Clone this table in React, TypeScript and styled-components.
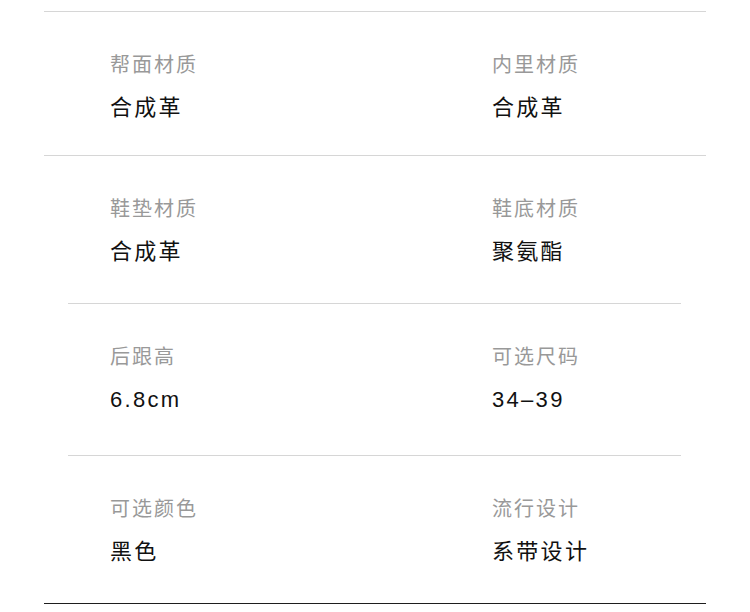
import styled, { createGlobalStyle } from "styled-components";

const GlobalStyle = createGlobalStyle`
  html, body {
    margin: 0;
    padding: 0;
    background: #ffffff;
  }
  body {
    font-family: "Liberation Sans", "Noto Sans CJK SC", sans-serif;
  }
`;

interface Spec {
  label: string;
  value: string;
}

interface Section {
  items: [Spec, Spec];
  inset: boolean;
  height: number;
}

const sections: Section[] = [
  {
    items: [
      { label: "帮面材质", value: "合成革" },
      { label: "内里材质", value: "合成革" },
    ],
    inset: false,
    height: 143,
  },
  {
    items: [
      { label: "鞋垫材质", value: "合成革" },
      { label: "鞋底材质", value: "聚氨酯" },
    ],
    inset: false,
    height: 147,
  },
  {
    items: [
      { label: "后跟高", value: "6.8cm" },
      { label: "可选尺码", value: "34–39" },
    ],
    inset: true,
    height: 151,
  },
  {
    items: [
      { label: "可选颜色", value: "黑色" },
      { label: "流行设计", value: "系带设计" },
    ],
    inset: true,
    height: 147,
  },
];

export default function App() {
  return (
    <>
      <GlobalStyle />
      <Page>
        {sections.map((section, i) => (
          <div key={i}>
            <Divider $inset={section.inset} />
            <Row $height={section.height}>
              {section.items.map((spec) => (
                <Cell key={spec.label}>
                  <Label>{spec.label}</Label>
                  <Value>{spec.value}</Value>
                </Cell>
              ))}
            </Row>
          </div>
        ))}
        <Divider $dark />
      </Page>
    </>
  );
}

const Page = styled.div`
  width: 750px;
  height: 612px;
  padding-top: 11px;
  box-sizing: border-box;
  background: #ffffff;
  display: flex;
  flex-direction: column;
`;

const Divider = styled.div<{ $inset?: boolean; $dark?: boolean }>`
  height: 1px;
  margin: 0 ${(p) => (p.$inset ? "69px 0 68px" : "44px")};
  background: ${(p) => (p.$dark ? "#1e1e1e" : "#d6d6d6")};
`;

const Row = styled.div<{ $height: number }>`
  height: ${(p) => p.$height}px;
  box-sizing: border-box;
  padding: 38px 0 0 110px;
  display: grid;
  grid-template-columns: 382px 1fr;
`;

const Cell = styled.div`
  display: flex;
  flex-direction: column;
  gap: 13px;
`;

const Label = styled.div`
  font-size: 20px;
  line-height: 30px;
  letter-spacing: 2px;
  color: #999999;
`;

const Value = styled.div`
  font-size: 22px;
  line-height: 30px;
  letter-spacing: 2.3px;
  color: #111111;
`;
